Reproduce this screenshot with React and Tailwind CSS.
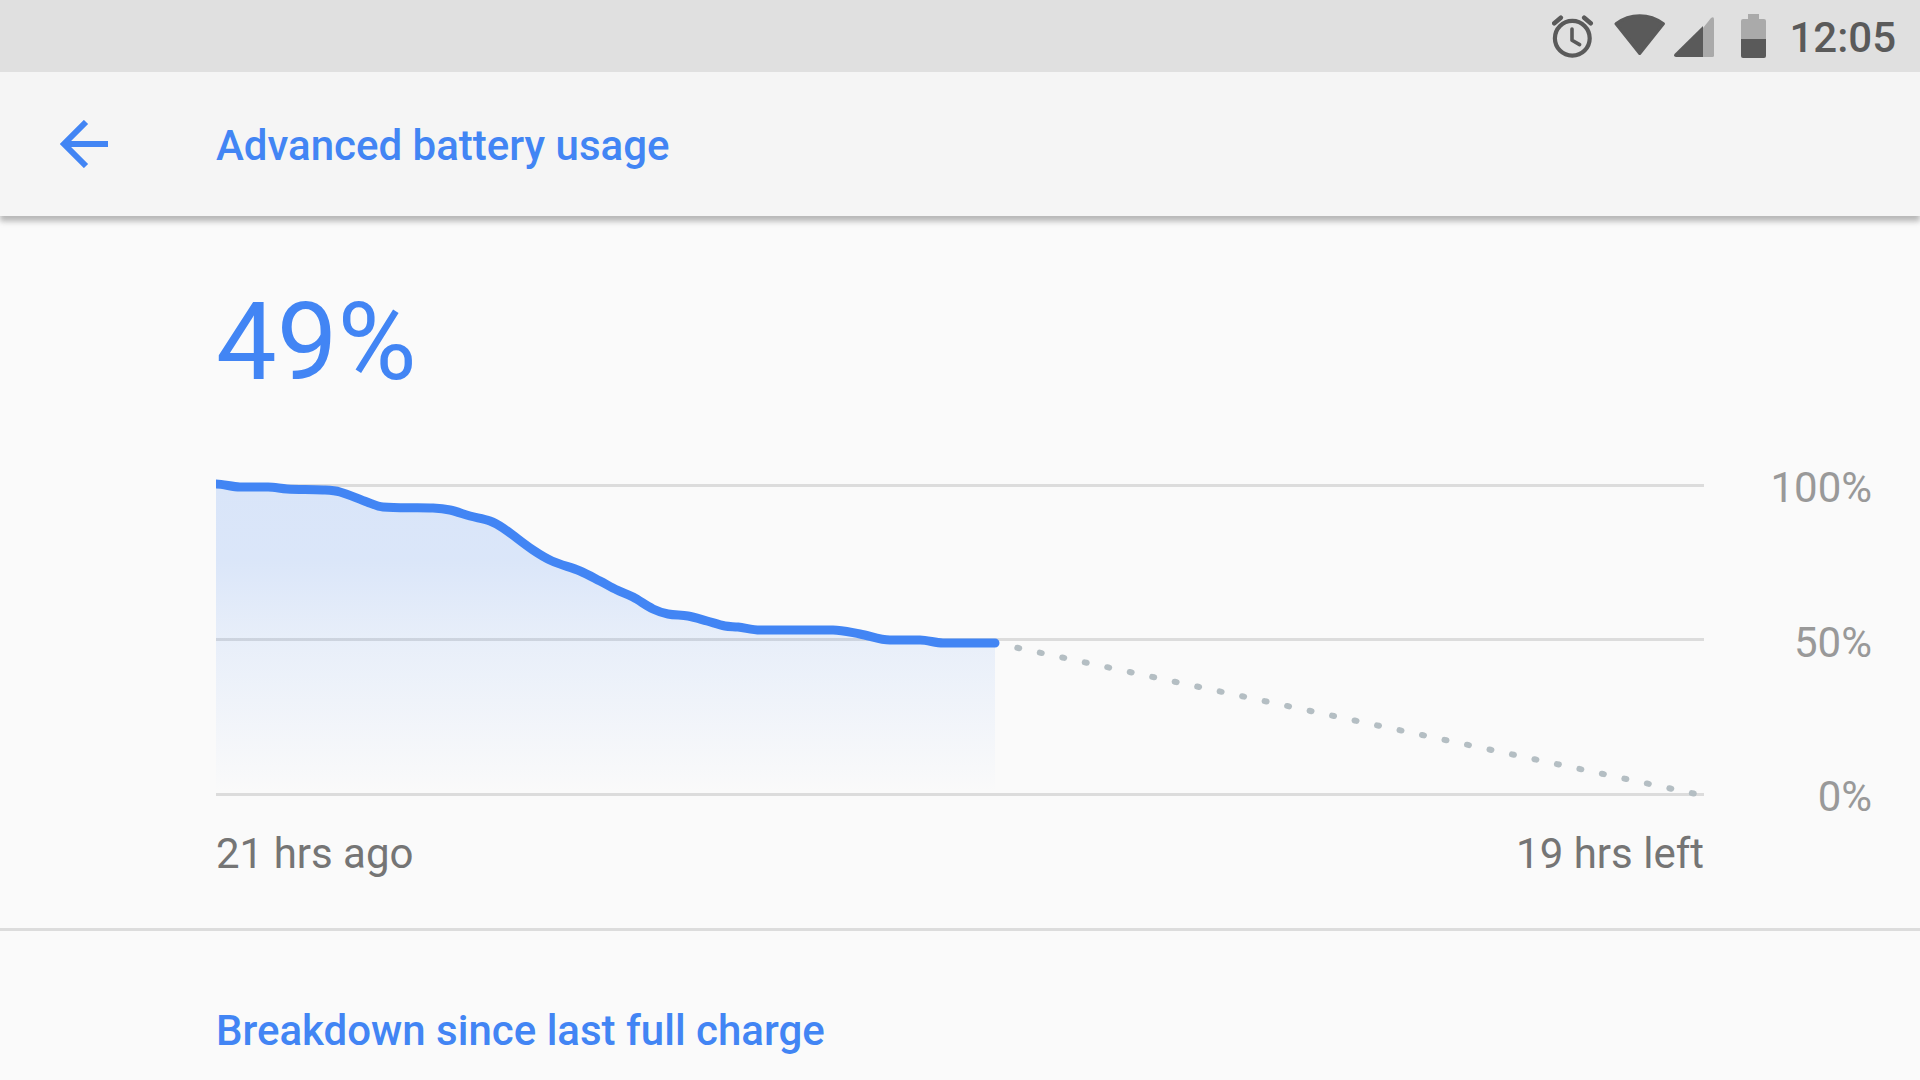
import { useId } from 'react';

// Battery level over time in plot units: y = 0 is 100%, y = 309 is 0%
const HISTORY = [
  [0, 0], [24, 3], [52, 3], [71, 5], [107, 6], [124, 8], [151, 18], [167, 23],
  [217, 24], [234, 26], [254, 32], [274, 37], [287, 44], [317, 66], [336, 77],
  [364, 87], [384, 97], [401, 106], [417, 113], [437, 125], [452, 130],
  [472, 132], [491, 137], [509, 142], [522, 143], [544, 146], [617, 146],
  [644, 150], [674, 156], [704, 156], [727, 159], [779, 159],
];

const GRID_LINES = [0, 154, 309];
const LEVELS = ['100%', '50%', '0%'];

const slopeAt = (points, i) => {
  const prev = points[i - 1] || points[i];
  const next = points[i + 1] || points[i];
  // A flat neighbour keeps the curve flat, so plateaus do not overshoot
  if (prev[1] === points[i][1] || next[1] === points[i][1]) return 0;
  return (next[1] - prev[1]) / (next[0] - prev[0]);
};

const toPath = (points) => {
  let d = `M${points[0][0]} ${points[0][1]}`;
  for (let i = 0; i < points.length - 1; i++) {
    const [x1, y1] = points[i];
    const [x2, y2] = points[i + 1];
    const dx = (x2 - x1) / 3;
    d += ` C${x1 + dx} ${y1 + dx * slopeAt(points, i)}`;
    d += ` ${x2 - dx} ${y2 - dx * slopeAt(points, i + 1)}`;
    d += ` ${x2} ${y2}`;
  }
  return d;
};

const StatusBar = () => {
  return (
    <div className="flex h-18 items-center justify-end bg-[#e0e0e0] pr-6 text-[#5a5a5a]">
      <svg className="mr-5 h-11 w-[42px]" viewBox="0 0 42 44" fill="none" stroke="currentColor" strokeLinecap="round" strokeLinejoin="round" aria-hidden="true">
        <circle cx="20.3" cy="24.3" r="17.4" strokeWidth="4.2" />
        <path d="M20 15v11.2l7.6 4.4" strokeWidth="3.6" />
        <path d="M2.300 9.300l6.500-5.500M32.200 3.800l6.500 5.500" strokeWidth="4.6" />
      </svg>
      <svg className="mr-2 h-11 w-[52px]" viewBox="0 0 52 44" fill="currentColor" stroke="currentColor" strokeWidth="3" strokeLinejoin="round" aria-hidden="true">
        <path d="M2 9.8C9 4.500 17 1.800 25.700 1.800S42.400 4.500 49.400 9.800L25.700 39.500z" />
      </svg>
      <svg className="mr-[27px] h-11 w-10" viewBox="0 0 40 44" aria-hidden="true">
        <path d="M29 14L37 4Q40 2 40 5.500V41.500Q40 43 38.500 43H29z" fill="#aaaaaa" />
        <path d="M29 12V43H2Q-.8 42.500 .5 40z" fill="currentColor" />
      </svg>
      <svg className="mr-[23px] h-11 w-[25px]" viewBox="0 0 25 44" aria-hidden="true">
        <path d="M7 0h11v5h5q2 0 2 2v18H0V7q0-2 2-2h5z" fill="#aaaaaa" />
        <path d="M0 25h25v17q0 2-2 2H2q-2 0-2-2z" fill="currentColor" />
      </svg>
      <time className="pt-1 text-[42px] leading-12 font-medium">12:05</time>
    </div>
  );
};

const AppBar = () => {
  return (
    <header className="relative flex h-36 items-center bg-[#f5f5f5] text-[#4285f4] shadow-[0_5px_5px_rgba(0,0,0,0.22),0_7px_7px_rgba(0,0,0,0.06)]">
      <button type="button" aria-label="Back" className="ml-15 mr-27 w-12">
        <svg className="h-12 w-12" viewBox="0 0 48 48" fill="none" stroke="currentColor" strokeWidth="6" aria-hidden="true">
          <path d="M48 24H5M26 2L4 24l22 22" />
        </svg>
      </button>
      <h1 className="pt-1 text-[42px] leading-12 font-medium">Advanced battery usage</h1>
    </header>
  );
};

const BatteryChart = () => {
  const gradientId = useId();
  const line = toPath(HISTORY);

  return (
    <div className="flex">
      <div className="min-w-0 flex-1">
        <svg className="block h-auto w-full" viewBox="0 -20 1488 357" role="img" aria-label="Battery level history and estimate">
          <defs>
            <linearGradient id={gradientId} gradientUnits="userSpaceOnUse" x1="0" y1="0" x2="0" y2="309">
              <stop offset="0" stopColor="#4285f4" stopOpacity="0.18" />
              <stop offset="0.25" stopColor="#4285f4" stopOpacity="0.17" />
              <stop offset="0.5" stopColor="#4285f4" stopOpacity="0.1" />
              <stop offset="1" stopColor="#4285f4" stopOpacity="0" />
            </linearGradient>
          </defs>
          {GRID_LINES.map((y) => (
            <rect key={y} x="0" y={y} width="1488" height="3" fill="#dcdcdc" />
          ))}
          <path d={`${line} V309 H0 Z`} fill={`url(#${gradientId})`} />
          <path d={line} fill="none" stroke="#4285f4" strokeWidth="9" strokeLinecap="round" strokeLinejoin="round" />
          {/* Estimated drain */}
          <path d="M801.3 163.800L1478 309.600" fill="none" stroke="#b4bec3" strokeWidth="6" strokeLinecap="round" strokeDasharray="2 21" />
        </svg>
        <div className="mt-[9px] flex justify-between text-[#757575]">
          <span>21 hrs ago</span>
          <span>19 hrs left</span>
        </div>
      </div>
      <div className="mb-[57px] flex w-42 flex-col justify-between text-right text-[#999999]">
        {LEVELS.map((level) => (
          <span key={level}>{level}</span>
        ))}
      </div>
    </div>
  );
};

const App = () => {
  return (
    <div className="min-h-screen bg-[#fafafa] font-[Roboto,sans-serif] text-[42px] leading-12">
      <StatusBar />
      <AppBar />
      <main>
        <section className="border-b-3 border-[#dcdcdc] pt-[66px] pr-12 pb-[50px] pl-54">
          <p className="mb-[62px] text-[108px] leading-[120px] text-[#4285f4]">49%</p>
          <BatteryChart />
        </section>
        <section className="pt-19 pl-54">
          <h2 className="font-medium text-[#4285f4]">Breakdown since last full charge</h2>
        </section>
      </main>
    </div>
  );
};

export default App;
